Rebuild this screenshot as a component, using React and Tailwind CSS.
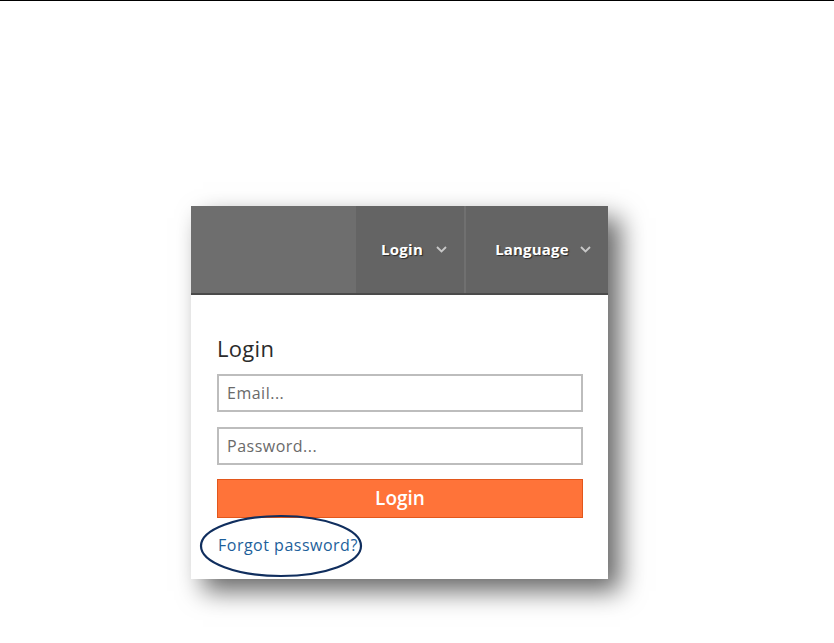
import React from 'react';

const Chevron = ({ gap }) => (
  <svg width="11" height="7" viewBox="0 0 11 7" className={gap}>
    <path d="M1 1l4.5 4.5L10 1" fill="none" stroke="#c8c8c8" strokeWidth="1.8" />
  </svg>
);

const App = () => {
  return (
    <div className="min-h-screen bg-white font-['Open_Sans',sans-serif]">
      {/* top rule */}
      <div className="h-px bg-black" />

      <div className="pl-[191px] pt-[205px]">
        <div className="relative w-[417px] bg-white shadow-[12px_12px_24px_rgba(0,0,0,0.6)]">
          {/* header bar */}
          <header className="flex h-[89px] border-b-2 border-[#4a4a4a] bg-[#6e6e6e]">
            <div className="w-[165px]" />
            <div className="flex w-[110px] items-center justify-center border-r-2 border-[#707070] bg-[#646464] pl-[8px]">
              <span className="text-[15px] font-bold tracking-[0.3px] text-white [text-shadow:1px_1px_1px_rgba(0,0,0,0.6)]">Login</span>
              <Chevron gap="ml-[13px]" />
            </div>
            <div className="flex flex-1 items-center justify-center bg-[#646464] pl-[12px]">
              <span className="text-[15px] font-bold tracking-[0.2px] text-white [text-shadow:1px_1px_1px_rgba(0,0,0,0.6)]">Language</span>
              <Chevron gap="ml-[11px]" />
            </div>
          </header>

          {/* form */}
          <main className="pb-[22px] pl-[26px] pr-[25px] pt-[39px]">
            <h1 className="mb-[12px] text-[22px] leading-[28px] tracking-[0.3px] text-[#2b2b2b]">Login</h1>
            <div className="flex flex-col gap-[15px]">
              <div className="flex h-[38px] items-center border-2 border-[#bdbdbd] px-[8px] text-[16px] tracking-[0.5px] text-[#6a6a6a]">Email...</div>
              <div className="flex h-[38px] items-center border-2 border-[#bdbdbd] px-[8px] text-[16px] tracking-[0.5px] text-[#6a6a6a]">Password...</div>
            </div>
            <button className="mt-[14px] flex h-[39px] w-full items-center justify-center border border-[#e2571c] bg-[#ff7339] text-[19px] font-semibold text-white">
              Login
            </button>
            <div className="relative mt-[15px] w-fit pl-px">
              <a className="text-[16px] leading-[24px] tracking-[0.5px] text-[#1d5f9b]">Forgot password?</a>
              <svg className="absolute left-[-18px] top-[-19px]" width="166" height="64" viewBox="0 0 166 64">
                <ellipse cx="82" cy="32" rx="80" ry="30" fill="none" stroke="#102e5e" strokeWidth="2.2" />
              </svg>
            </div>
          </main>
        </div>
      </div>
    </div>
  );
};

export default App;
